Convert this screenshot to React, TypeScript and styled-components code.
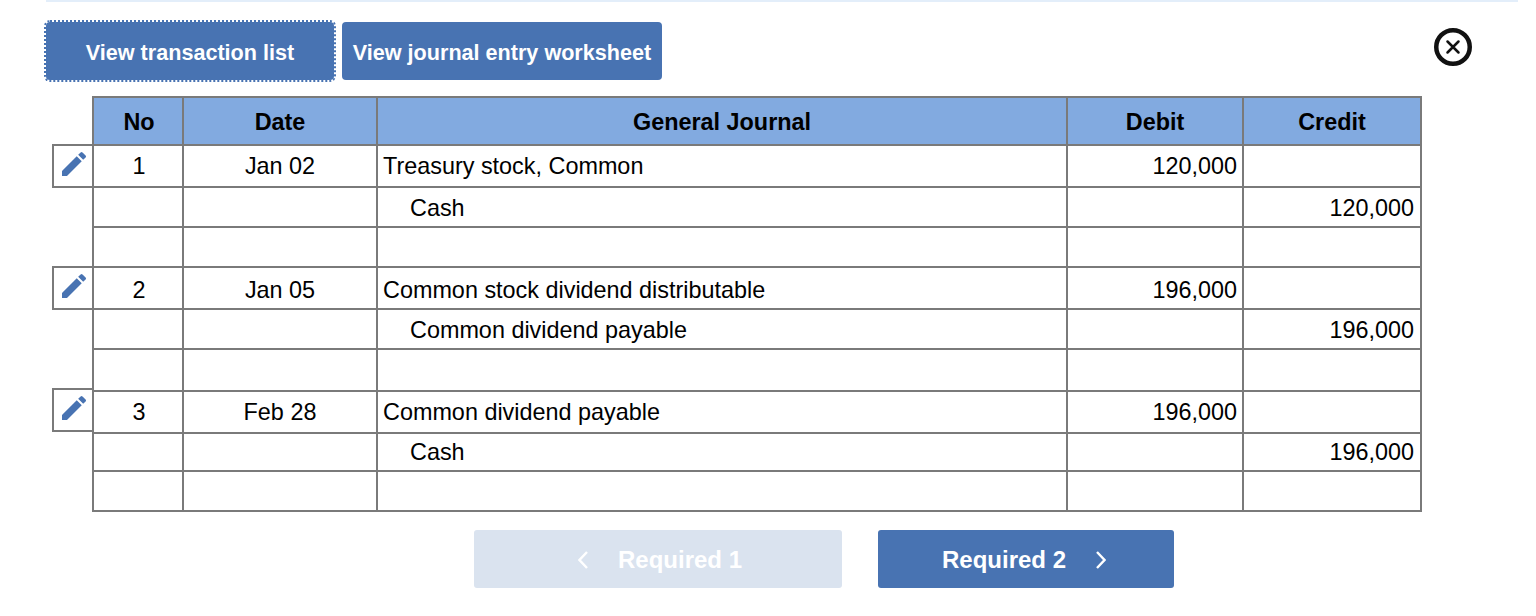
import styled, { createGlobalStyle } from 'styled-components';
import { MdEdit } from 'react-icons/md';

const GlobalStyle = createGlobalStyle`
  body {
    margin: 0;
    background: #fff;
    font-family: 'Liberation Sans', Arial, sans-serif;
    color: #000;
  }
`;

const Page = styled.main`
  width: 1536px;
  height: 616px;
  padding: 0 18px 0 46px;
  box-sizing: border-box;
  overflow: hidden;
`;

const TopRule = styled.div`
  height: 2px;
  background: #e3eefa;
`;

const Toolbar = styled.div`
  display: flex;
  align-items: flex-start;
  gap: 8px;
  margin-top: 20px;
  height: 58px;
`;

const TabButton = styled.button<{ $width: number; $focused?: boolean }>`
  width: ${({ $width }) => $width}px;
  height: 58px;
  padding: 3px 0 0;
  border: 0;
  border-radius: 4px;
  background: #4873b2;
  color: #fff;
  font: bold 21.6px 'Liberation Sans', Arial, sans-serif;
  outline: ${({ $focused }) => ($focused ? '2px dotted #4873b2' : 'none')};
`;

const CloseButton = styled.button`
  margin-left: auto;
  margin-right: 46px;
  padding: 0;
  border: 0;
  background: none;
  width: 38px;
  height: 38px;
  margin-top: 6px;
  line-height: 0;
`;

const Journal = styled.table`
  margin: 16px 0 0 46px;
  width: 1330px;
  table-layout: fixed;
  border-collapse: collapse;
  font-size: 23.4px;
`;

const HeaderCell = styled.th`
  height: 44px;
  padding: 2px 0 0;
  border: 2px solid #7a7a7a;
  background: #82aae0;
  font-weight: bold;
  text-align: center;

  &:first-child {
    padding-left: 2px;
  }
`;

const Cell = styled.td<{ $align?: 'left' | 'center' | 'right'; $indent?: boolean; $nudge?: number }>`
  position: relative;
  padding: ${({ $nudge }) => ($nudge ?? 0) * 2}px ${({ $align }) => ($align === 'right' ? '6px' : '5px')} 0
    ${({ $indent }) => ($indent ? '32px' : '5px')};
  border: 2px solid #7a7a7a;
  text-align: ${({ $align }) => $align ?? 'left'};
  white-space: nowrap;

  &:first-child {
    padding-left: 7px;
  }

  &:nth-child(4) {
    padding-right: 5px;
  }
`;

const Row = styled.tr<{ $height: number }>`
  height: ${({ $height }) => $height}px;
`;

const EditButton = styled.button<{ $top: number }>`
  position: absolute;
  left: -42px;
  top: ${({ $top }) => $top}px;
  width: 40px;
  height: 44px;
  padding: 2px 0 0 2px;
  box-sizing: border-box;
  border: 2px solid #7a7a7a;
  border-right: 0;
  background: #fff;
  color: #4873b2;
  display: flex;
  justify-content: center;
  line-height: 0;
`;

const Pager = styled.nav`
  display: flex;
  gap: 36px;
  margin: 18px 0 0 428px;
`;

const PagerButton = styled.button<{ $width: number; $disabled?: boolean }>`
  width: ${({ $width }) => $width}px;
  height: 58px;
  padding: ${({ $disabled }) => ($disabled ? '2px 0 0 4px' : '2px 4px 0 0')};
  border: 0;
  border-radius: 3px;
  background: ${({ $disabled }) => ($disabled ? '#dae3ef' : '#4873b2')};
  color: #fff;
  font: bold 24px 'Liberation Sans', Arial, sans-serif;
  display: flex;
  align-items: center;
  justify-content: center;
  gap: 30px;
`;

const columns = [90, 194, 690, 176, 178];

const rows = [
  { height: 42, no: '1', date: 'Jan 02', account: 'Treasury stock, Common', debit: '120,000', editTop: -2 },
  { height: 40, account: 'Cash', credit: '120,000', indent: true, nudge: 1 },
  { height: 40 },
  { height: 42, no: '2', date: 'Jan 05', account: 'Common stock dividend distributable', debit: '196,000', editTop: -2, nudge: 2 },
  { height: 40, account: 'Common dividend payable', credit: '196,000', indent: true, nudge: 1 },
  { height: 42 },
  { height: 42, no: '3', date: 'Feb 28', account: 'Common dividend payable', debit: '196,000', editTop: -4 },
  { height: 38, account: 'Cash', credit: '196,000', indent: true },
  { height: 40 },
];

const CloseIcon = () => (
  <svg width="38" height="38" viewBox="0 0 38 38" fill="none" stroke="#111" strokeLinecap="round">
    <circle cx="19" cy="19" r="16.75" strokeWidth="4.5" />
    <path d="M13.5 13.5l11 11M24.5 13.5l-11 11" strokeWidth="2.5" />
  </svg>
);

const Chevron = ({ flip }: { flip?: boolean }) => (
  <svg width="10" height="18" viewBox="0 0 10 18" fill="none" stroke="#fff" strokeWidth="2.4">
    <path d={flip ? 'M9 1L1.5 9L9 17' : 'M1 1L8.5 9L1 17'} />
  </svg>
);

const App = () => (
  <Page>
    <GlobalStyle />
    <TopRule />
    <Toolbar>
      <TabButton $width={288} $focused>View transaction list</TabButton>
      <TabButton $width={320}>View journal entry worksheet</TabButton>
      <CloseButton aria-label="Close"><CloseIcon /></CloseButton>
    </Toolbar>
    <Journal>
      <colgroup>
        {columns.map((width) => <col key={width} width={width} />)}
      </colgroup>
      <thead>
        <tr>
          <HeaderCell>No</HeaderCell>
          <HeaderCell>Date</HeaderCell>
          <HeaderCell>General Journal</HeaderCell>
          <HeaderCell>Debit</HeaderCell>
          <HeaderCell>Credit</HeaderCell>
        </tr>
      </thead>
      <tbody>
        {rows.map((row, i) => (
          <Row key={i} $height={row.height}>
            <Cell $align="center" $nudge={row.nudge}>
              {row.no && (
                <EditButton aria-label="Edit" $top={row.editTop ?? 0}>
                  <MdEdit size={32} />
                </EditButton>
              )}
              {row.no}
            </Cell>
            <Cell $align="center" $nudge={row.nudge}>{row.date}</Cell>
            <Cell $indent={row.indent} $nudge={row.nudge}>{row.account}</Cell>
            <Cell $align="right" $nudge={row.nudge}>{row.debit}</Cell>
            <Cell $align="right" $nudge={row.nudge}>{row.credit}</Cell>
          </Row>
        ))}
      </tbody>
    </Journal>
    <Pager>
      <PagerButton $width={368} $disabled>
        <Chevron flip />
        Required 1
      </PagerButton>
      <PagerButton $width={296}>
        Required 2
        <Chevron />
      </PagerButton>
    </Pager>
  </Page>
);

export default App;
